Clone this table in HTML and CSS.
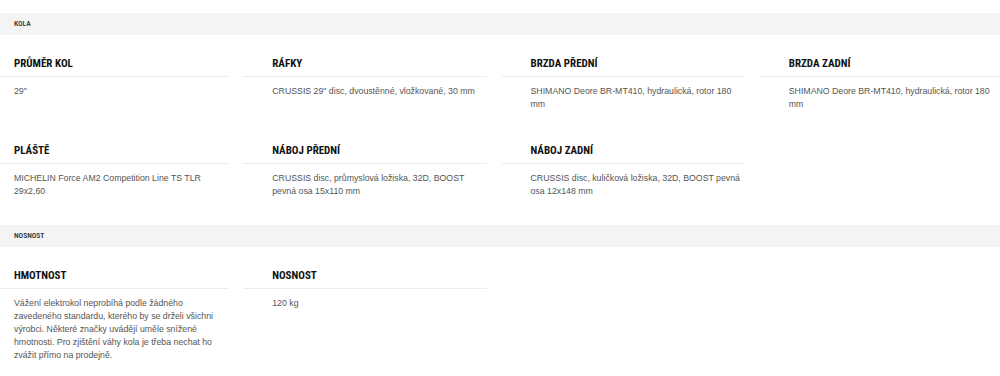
FILE: index.html
```html
<!DOCTYPE html>
<html lang="cs">
<head>
<meta charset="utf-8">
<title>Specifikace</title>
<link rel="stylesheet" href="styles.css">
</head>
<body>
<div class="page">
  <section class="spec">
    <div class="band">KOLA</div>
    <div class="grid">
      <div class="cell"><h3 class="name">PRŮMĚR KOL</h3><p class="value">29"</p></div>
      <div class="cell"><h3 class="name">RÁFKY</h3><p class="value">CRUSSIS 29" disc, dvoustěnné, vložkované, 30 mm</p></div>
      <div class="cell"><h3 class="name">BRZDA PŘEDNÍ</h3><p class="value">SHIMANO Deore BR-MT410, hydraulická, rotor 180 mm</p></div>
      <div class="cell"><h3 class="name">BRZDA ZADNÍ</h3><p class="value">SHIMANO Deore BR-MT410, hydraulická, rotor 180 mm</p></div>
      <div class="cell"><h3 class="name">PLÁŠTĚ</h3><p class="value">MICHELIN Force AM2 Competition Line TS TLR 29x2,60</p></div>
      <div class="cell"><h3 class="name">NÁBOJ PŘEDNÍ</h3><p class="value">CRUSSIS disc, průmyslová ložiska, 32D, BOOST pevná osa 15x110 mm</p></div>
      <div class="cell"><h3 class="name">NÁBOJ ZADNÍ</h3><p class="value">CRUSSIS disc, kuličková ložiska, 32D, BOOST pevná osa 12x148 mm</p></div>
    </div>
  </section>
  <section class="spec">
    <div class="band">NOSNOST</div>
    <div class="grid">
      <div class="cell"><h3 class="name">HMOTNOST</h3><p class="value">Vážení elektrokol neprobíhá podle žádného zavedeného standardu, kterého by se drželi všichni výrobci. Některé značky uvádějí uměle snížené hmotnosti. Pro zjištění váhy kola je třeba nechat ho zvážit přímo na prodejně.</p></div>
      <div class="cell"><h3 class="name">NOSNOST</h3><p class="value">120 kg</p></div>
    </div>
  </section>
</div>
</body>
</html>
```
FILE: styles.css
```css
html, body {
  margin: 0;
  padding: 0;
  background: #ffffff;
}
.page {
  padding-top: 13px;
  overflow: hidden;
  width: 1000px;
  font-family: "Liberation Sans", Arial, sans-serif;
}
.band {
  height: 22px;
  line-height: 22px;
  background: #f4f4f4;
  padding-left: 14px;
  font-family: "Roboto", "Open Sans", sans-serif;
  font-stretch: 75%;
  font-weight: 600;
  font-size: 7.5px;
  color: #3a3a3a;
}
.grid {
  display: grid;
  grid-template-columns: repeat(4, 1fr);
  width: 1033px;
  margin-left: -15px;
  padding: 22px 0 27px;
  row-gap: 33px;
}
.cell {
  padding-right: 15px;
}
.name {
  margin: 0;
  padding: 0 0 5px 29px;
  font-family: "Roboto", "Open Sans", sans-serif;
  font-stretch: 75%;
  font-weight: 700;
  font-size: 11px;
  line-height: 14px;
  color: #111;
  border-bottom: 1px solid #ececec;
}
.value {
  margin: 8px 0 0;
  padding: 0 0 0 29px;
  font-size: 8.75px;
  line-height: 13px;
  color: #555;
}
```
